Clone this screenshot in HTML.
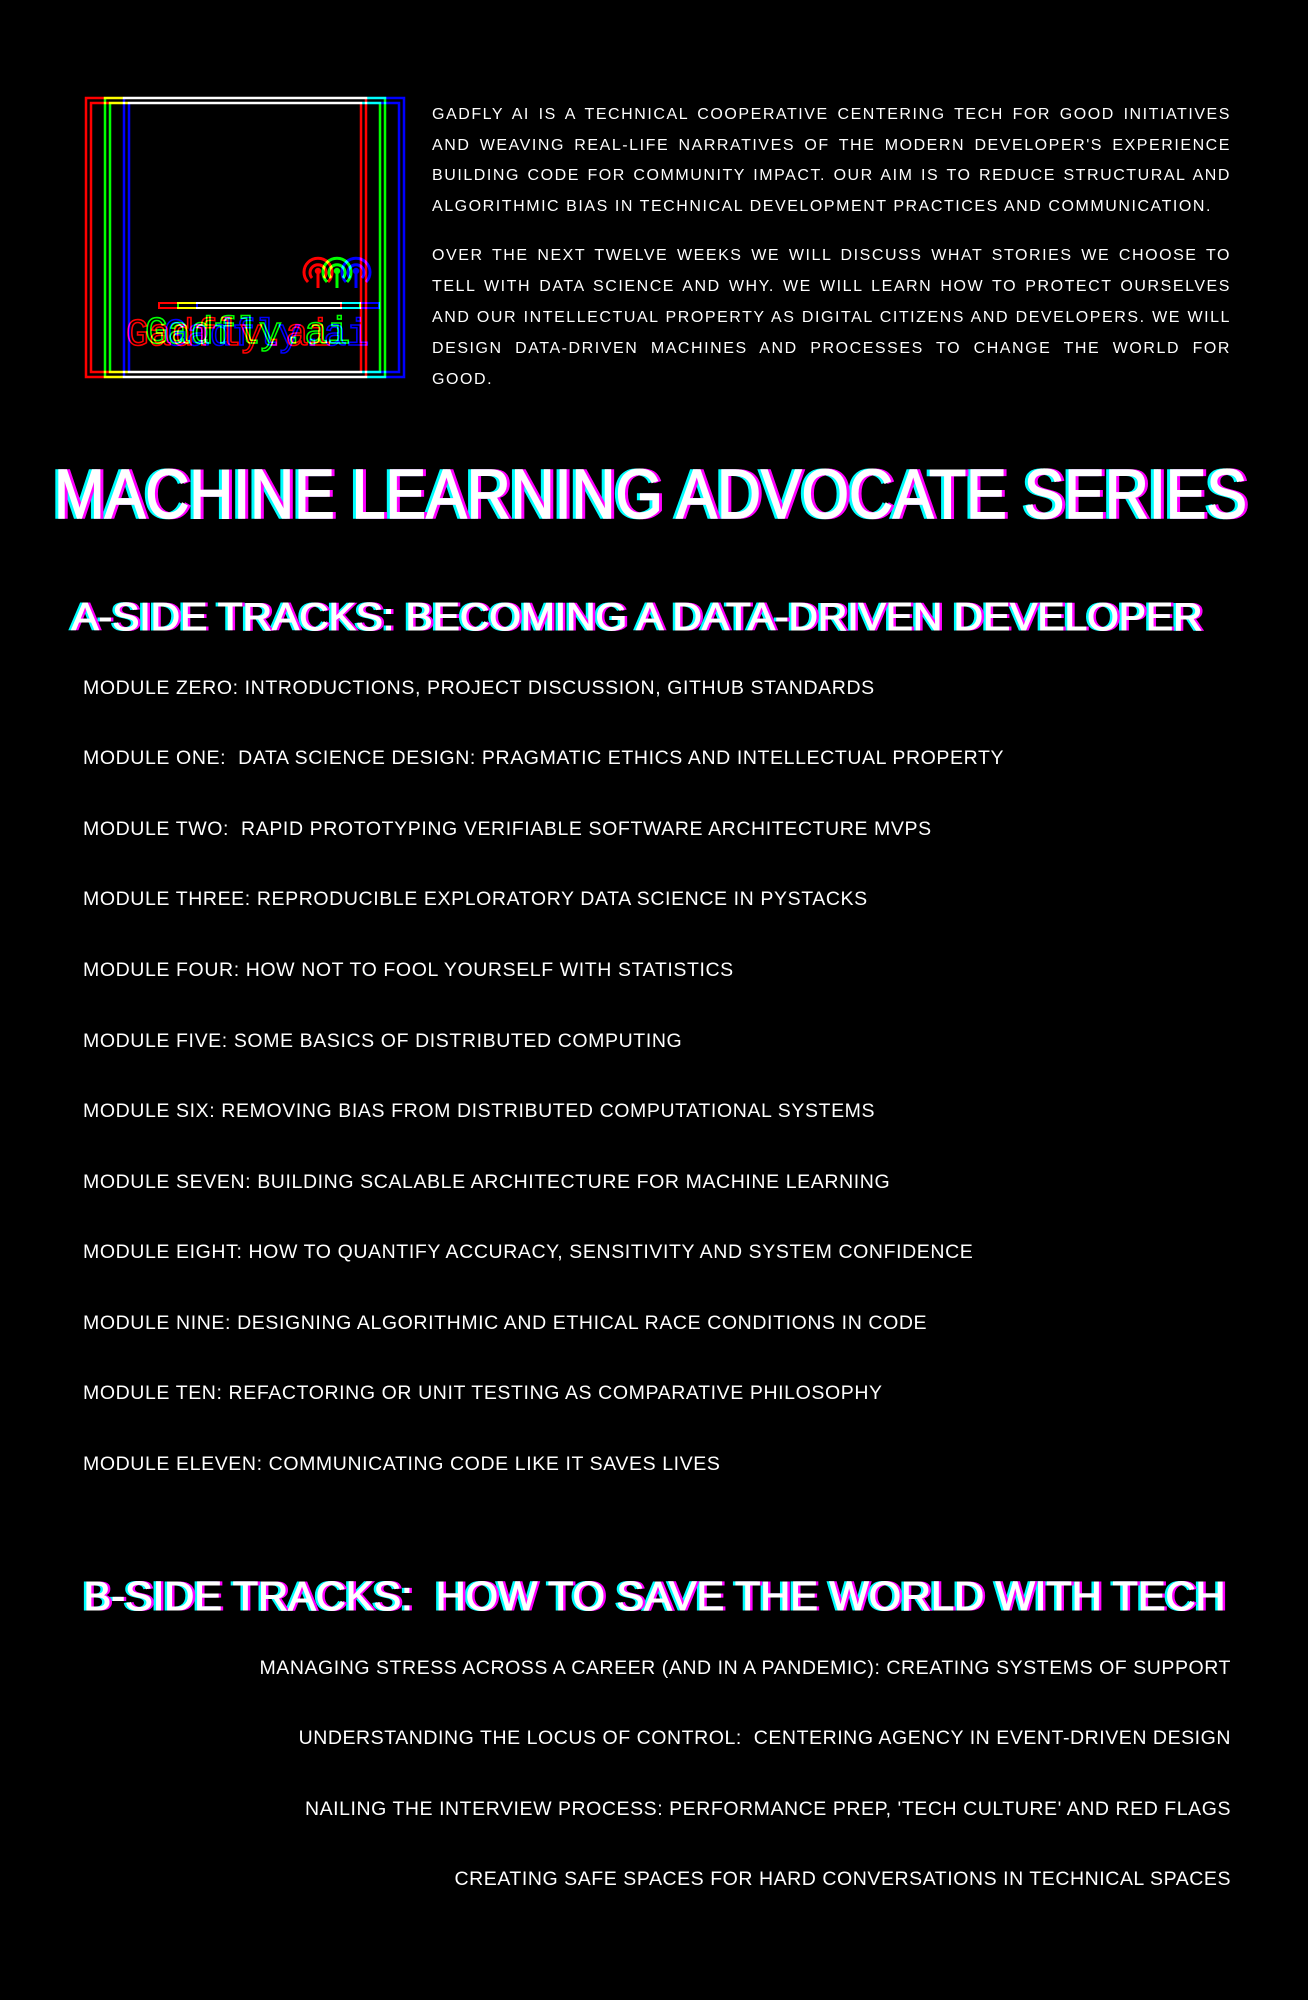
<!DOCTYPE html>
<html><head><meta charset="utf-8">
<style>
html,body{margin:0;padding:0;background:#000;}
body{width:1308px;height:2000px;position:relative;overflow:hidden;font-family:"Liberation Sans",sans-serif;color:#fff;}
.p{position:absolute;left:432px;width:799px;font-size:16px;line-height:1;letter-spacing:1.55px;text-align:justify;text-align-last:justify;white-space:nowrap;}
.p.l{text-align-last:left;}
.m{position:absolute;left:83px;font-size:19.5px;line-height:1;white-space:nowrap;letter-spacing:0.6px;}
.b{position:absolute;right:77px;font-size:19.5px;line-height:1;white-space:nowrap;letter-spacing:0.55px;text-align:right;}
svg{position:absolute;left:0;top:0;}
</style></head><body>

<svg width="1308" height="2000" viewBox="0 0 1308 2000">
  <g fill="none" stroke-width="2.5">
    <g stroke="#f00" style="mix-blend-mode:screen">
      <rect x="86" y="98" width="280" height="279"/>
      <rect x="91" y="103" width="270" height="269"/>
      <rect x="159" y="303" width="182" height="5" stroke-width="2"/>
      <path d="M308 282 A14 14 0 1 1 328 282 M312 278 A8 8 0 1 1 324 278" stroke-width="3"/>
      <circle cx="318" cy="271" r="2" fill="#f00"/>
      <line x1="318" y1="271" x2="318" y2="288" stroke-width="3"/>
      <text x="126" y="345" font-family="Liberation Mono,monospace" font-size="38" stroke-width="1.6">Gadfly.ai</text>
    </g>
    <g stroke="#0f0" style="mix-blend-mode:screen">
      <rect x="105" y="98" width="280" height="279"/>
      <rect x="110" y="103" width="270" height="269"/>
      <rect x="178" y="303" width="182" height="5" stroke-width="2"/>
      <path d="M327 282 A14 14 0 1 1 347 282 M331 278 A8 8 0 1 1 343 278" stroke-width="3"/>
      <circle cx="337" cy="271" r="2" fill="#0f0"/>
      <line x1="337" y1="271" x2="337" y2="288" stroke-width="3"/>
      <text x="145" y="343" font-family="Liberation Mono,monospace" font-size="38" stroke-width="1.6">Gadfly.ai</text>
    </g>
    <g stroke="#00f" style="mix-blend-mode:screen">
      <rect x="124" y="98" width="280" height="279"/>
      <rect x="129" y="103" width="270" height="269"/>
      <rect x="197" y="303" width="182" height="5" stroke-width="2"/>
      <path d="M346 282 A14 14 0 1 1 366 282 M350 278 A8 8 0 1 1 362 278" stroke-width="3"/>
      <circle cx="356" cy="271" r="2" fill="#00f"/>
      <line x1="356" y1="271" x2="356" y2="288" stroke-width="3"/>
      <text x="164" y="345" font-family="Liberation Mono,monospace" font-size="38" stroke-width="1.6">Gadfly.ai</text>
    </g>
  </g>

  <g font-family="Liberation Sans,sans-serif">
    <text x="51" y="518" font-size="70" textLength="1193" lengthAdjust="spacingAndGlyphs" fill="#0ff" stroke="#0ff" stroke-width="1.5">MACHINE LEARNING ADVOCATE SERIES</text>
    <text x="57" y="518" font-size="70" textLength="1193" lengthAdjust="spacingAndGlyphs" fill="#f0f" stroke="#f0f" stroke-width="1.5">MACHINE LEARNING ADVOCATE SERIES</text>
    <text x="54" y="518" font-size="70" textLength="1193" lengthAdjust="spacingAndGlyphs" fill="#fff" stroke="#fff" stroke-width="1.5">MACHINE LEARNING ADVOCATE SERIES</text>

    <text x="69" y="630" font-size="39" textLength="1131" lengthAdjust="spacingAndGlyphs" fill="#0ff" stroke="#0ff" stroke-width="1">A-SIDE TRACKS: BECOMING A DATA-DRIVEN DEVELOPER</text>
    <text x="74" y="630" font-size="39" textLength="1131" lengthAdjust="spacingAndGlyphs" fill="#f0f" stroke="#f0f" stroke-width="1">A-SIDE TRACKS: BECOMING A DATA-DRIVEN DEVELOPER</text>
    <text x="71.5" y="630" font-size="39" textLength="1131" lengthAdjust="spacingAndGlyphs" fill="#fff" stroke="#fff" stroke-width="1">A-SIDE TRACKS: BECOMING A DATA-DRIVEN DEVELOPER</text>

    <text x="81" y="1610" font-size="41" textLength="1142" lengthAdjust="spacingAndGlyphs" fill="#0ff" stroke="#0ff" stroke-width="1">B-SIDE TRACKS:&#160; HOW TO SAVE THE WORLD WITH TECH</text>
    <text x="86" y="1610" font-size="41" textLength="1142" lengthAdjust="spacingAndGlyphs" fill="#f0f" stroke="#f0f" stroke-width="1">B-SIDE TRACKS:&#160; HOW TO SAVE THE WORLD WITH TECH</text>
    <text x="83.5" y="1610" font-size="41" textLength="1142" lengthAdjust="spacingAndGlyphs" fill="#fff" stroke="#fff" stroke-width="1">B-SIDE TRACKS:&#160; HOW TO SAVE THE WORLD WITH TECH</text>
  </g>
</svg>

<div class="p" style="top:107px">GADFLY AI IS A TECHNICAL COOPERATIVE CENTERING TECH FOR GOOD INITIATIVES</div>
<div class="p" style="top:138px">AND WEAVING REAL-LIFE NARRATIVES OF THE MODERN DEVELOPER'S EXPERIENCE</div>
<div class="p" style="top:168px">BUILDING CODE FOR COMMUNITY IMPACT. OUR AIM IS TO REDUCE STRUCTURAL AND</div>
<div class="p l" style="top:199px">ALGORITHMIC BIAS IN TECHNICAL DEVELOPMENT PRACTICES AND COMMUNICATION.</div>

<div class="p" style="top:248px">OVER THE NEXT TWELVE WEEKS WE WILL DISCUSS WHAT STORIES WE CHOOSE TO</div>
<div class="p" style="top:279px">TELL WITH DATA SCIENCE AND WHY. WE WILL LEARN HOW TO PROTECT OURSELVES</div>
<div class="p" style="top:310px">AND OUR INTELLECTUAL PROPERTY AS DIGITAL CITIZENS AND DEVELOPERS. WE WILL</div>
<div class="p" style="top:341px">DESIGN DATA-DRIVEN MACHINES AND PROCESSES TO CHANGE THE WORLD FOR</div>
<div class="p l" style="top:372px">GOOD.</div>

<div class="m" style="top:679px">MODULE ZERO: INTRODUCTIONS, PROJECT DISCUSSION, GITHUB STANDARDS</div>
<div class="m" style="top:749px">MODULE ONE:&nbsp; DATA SCIENCE DESIGN: PRAGMATIC ETHICS AND INTELLECTUAL PROPERTY</div>
<div class="m" style="top:820px">MODULE TWO:&nbsp; RAPID PROTOTYPING VERIFIABLE SOFTWARE ARCHITECTURE MVPS</div>
<div class="m" style="top:890px">MODULE THREE: REPRODUCIBLE EXPLORATORY DATA SCIENCE IN PYSTACKS</div>
<div class="m" style="top:961px">MODULE FOUR: HOW NOT TO FOOL YOURSELF WITH STATISTICS</div>
<div class="m" style="top:1032px">MODULE FIVE: SOME BASICS OF DISTRIBUTED COMPUTING</div>
<div class="m" style="top:1102px">MODULE SIX: REMOVING BIAS FROM DISTRIBUTED COMPUTATIONAL SYSTEMS</div>
<div class="m" style="top:1173px">MODULE SEVEN: BUILDING SCALABLE ARCHITECTURE FOR MACHINE LEARNING</div>
<div class="m" style="top:1243px">MODULE EIGHT: HOW TO QUANTIFY ACCURACY, SENSITIVITY AND SYSTEM CONFIDENCE</div>
<div class="m" style="top:1314px">MODULE NINE: DESIGNING ALGORITHMIC AND ETHICAL RACE CONDITIONS IN CODE</div>
<div class="m" style="top:1384px">MODULE TEN: REFACTORING OR UNIT TESTING AS COMPARATIVE PHILOSOPHY</div>
<div class="m" style="top:1455px">MODULE ELEVEN: COMMUNICATING CODE LIKE IT SAVES LIVES</div>

<div class="b" style="top:1659px">MANAGING STRESS ACROSS A CAREER (AND IN A PANDEMIC): CREATING SYSTEMS OF SUPPORT</div>
<div class="b" style="top:1729px">UNDERSTANDING THE LOCUS OF CONTROL:&nbsp; CENTERING AGENCY IN EVENT-DRIVEN DESIGN</div>
<div class="b" style="top:1800px">NAILING THE INTERVIEW PROCESS: PERFORMANCE PREP, 'TECH CULTURE' AND RED FLAGS</div>
<div class="b" style="top:1870px">CREATING SAFE SPACES FOR HARD CONVERSATIONS IN TECHNICAL SPACES</div>

</body></html>
